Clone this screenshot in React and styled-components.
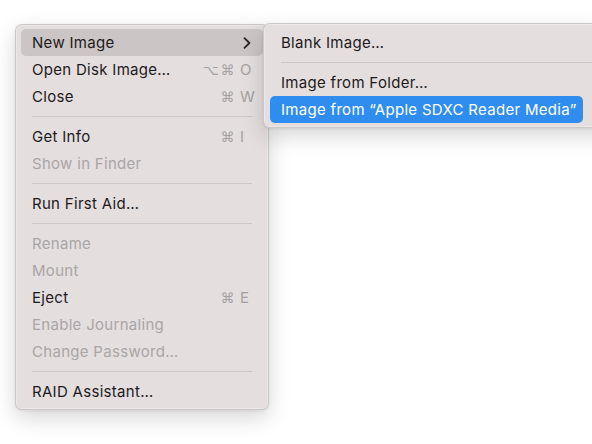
import React from "react";
import styled, { createGlobalStyle } from "styled-components";

const Global = createGlobalStyle`
  html, body { margin: 0; padding: 0; background: #ffffff; }
  body {
    font-family: Inter, "Noto Sans", "DejaVu Sans", sans-serif;
    -webkit-font-smoothing: antialiased;
  }
`;

const Stage = styled.div`
  width: 592px;
  height: 444px;
  overflow: hidden;
  padding: 24px 0 0 15px;
  box-sizing: border-box;
`;

const Anchor = styled.div`
  position: relative;
  width: 254px;
`;

const Menu = styled.div`
  box-sizing: border-box;
  background: #e4dedf;
  border-radius: 7px;
  border: 1px solid rgba(0, 0, 0, 0.1);
  box-shadow: 0 0 0 0.5px rgba(255, 255, 255, 0.6) inset,
    0 8px 22px rgba(0, 0, 0, 0.16), 0 1px 3px rgba(0, 0, 0, 0.08);
  display: flex;
  flex-direction: column;
`;

const MainMenu = styled(Menu)`
  width: 254px;
  padding: 4px 5px;
`;

const SubMenu = styled(Menu)`
  position: absolute;
  left: 248px;
  top: -1px;
  width: 350px;
  padding: 5px 29px 4px 6px;
  z-index: 2;
`;

const Row = styled.div`
  height: 27px;
  display: flex;
  align-items: center;
  padding: 0 7px 0 11px;
  border-radius: 5px;
  font-size: 15px;
  letter-spacing: 0.3px;
  background: ${(p) =>
    p.$active === "blue" ? "#2f8df0" : p.$active === "gray" ? "#cbc5c6" : "transparent"};
  color: ${(p) =>
    p.$active === "blue" ? "#ffffff" : p.$disabled ? "#aaa5a6" : "#1e1a1b"};
`;

const Label = styled.span`
  flex: 1;
  white-space: nowrap;
`;

const Shortcut = styled.span`
  display: grid;
  grid-template-columns: auto 16px;
  column-gap: 4px;
  align-items: center;
  color: #a5a0a1;
  font-size: 15px;
  letter-spacing: 0;
`;

const Mods = styled.span`
  text-align: right;
  font-family: "DejaVu Sans", sans-serif;
  font-size: 14px;
  letter-spacing: 1.5px;
`;

const Key = styled.span`
  text-align: left;
`;

const Chevron = styled.svg`
  width: 8px;
  height: 12px;
  margin-right: 5px;
`;

const Separator = styled.div`
  height: 13px;
  display: flex;
  align-items: center;
  padding: 0 11px;
  margin-right: ${(p) => p.$bleed || 0}px;
  &::after {
    content: "";
    flex: 1;
    height: 1px;
    background: #cdc7c8;
  }
`;

const main = [
  { label: "New Image", active: "gray", sub: true },
  { label: "Open Disk Image…", mods: "⌥⌘", key: "O" },
  { label: "Close", mods: "⌘", key: "W" },
  { sep: true },
  { label: "Get Info", mods: "⌘", key: "I" },
  { label: "Show in Finder", disabled: true },
  { sep: true },
  { label: "Run First Aid…" },
  { sep: true },
  { label: "Rename", disabled: true },
  { label: "Mount", disabled: true },
  { label: "Eject", mods: "⌘", key: "E" },
  { label: "Enable Journaling", disabled: true },
  { label: "Change Password…", disabled: true },
  { sep: true },
  { label: "RAID Assistant…" },
];

const sub = [
  { label: "Blank Image…" },
  { sep: true, bleed: -20 },
  { label: "Image from Folder…" },
  { label: "Image from “Apple SDXC Reader Media”", active: "blue" },
];

function Item({ item }) {
  if (item.sep) return <Separator $bleed={item.bleed} />;
  return (
    <Row $active={item.active} $disabled={item.disabled}>
      <Label>{item.label}</Label>
      {item.key && (
        <Shortcut>
          <Mods>{item.mods}</Mods>
          <Key>{item.key}</Key>
        </Shortcut>
      )}
      {item.sub && (
        <Chevron viewBox="0 0 8 12">
          <path d="M1.5 1.2 L6.4 6 L1.5 10.8" fill="none" stroke="#2a2526" strokeWidth="1.8" strokeLinecap="round" strokeLinejoin="round" />
        </Chevron>
      )}
    </Row>
  );
}

export default function App() {
  return (
    <>
      <Global />
      <Stage>
        <Anchor>
          <MainMenu>
            {main.map((it, i) => (
              <Item key={i} item={it} />
            ))}
          </MainMenu>
          <SubMenu>
            {sub.map((it, i) => (
              <Item key={i} item={it} />
            ))}
          </SubMenu>
        </Anchor>
      </Stage>
    </>
  );
}
